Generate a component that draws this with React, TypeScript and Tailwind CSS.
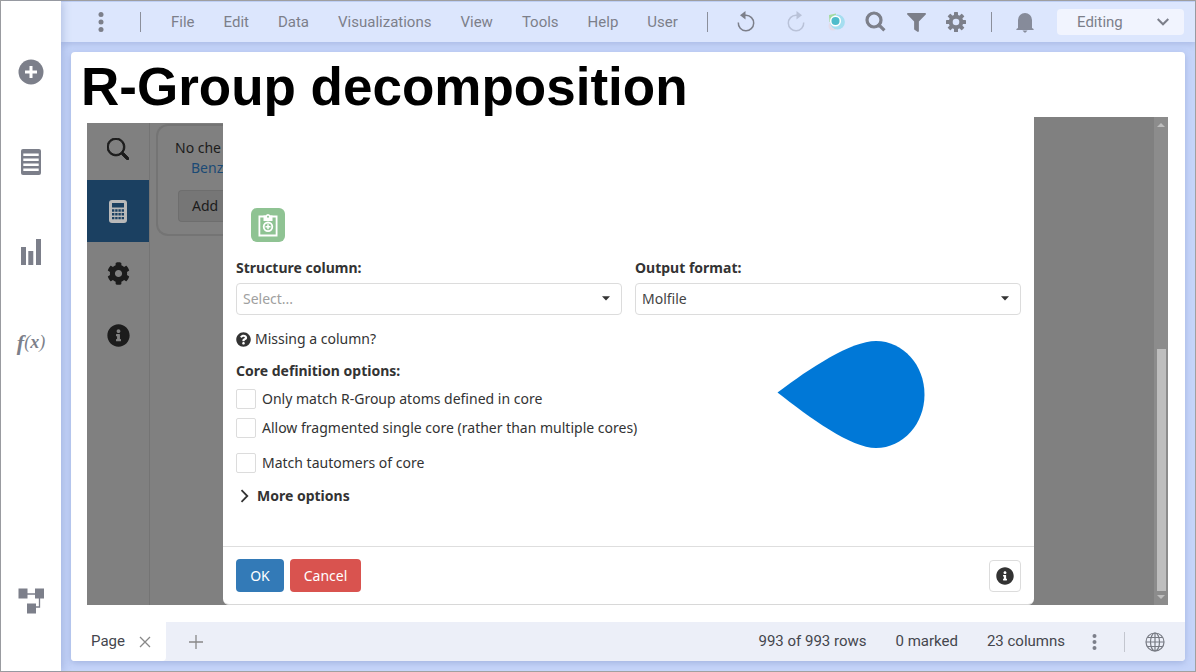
import type { ReactNode } from "react";
import { BiSearch } from "react-icons/bi";
import { BsSearch } from "react-icons/bs";
import { FaCog, FaFilter, FaInfoCircle, FaQuestionCircle } from "react-icons/fa";

const menus = ["File", "Edit", "Data", "Visualizations", "View", "Tools", "Help", "User"];

function IconButton({ label, className, children }: { label: string; className: string; children: ReactNode }) {
  return (
    <button type="button" aria-label={label} className={`flex shrink-0 items-center justify-center ${className}`}>
      {children}
    </button>
  );
}

function Dots({ className }: { className: string }) {
  return (
    <svg viewBox="0 0 6 20" className={className} fill="currentColor">
      <circle cx="3" cy="2.6" r="2.5" />
      <circle cx="3" cy="10" r="2.5" />
      <circle cx="3" cy="17.4" r="2.5" />
    </svg>
  );
}

function Undo({ className }: { className: string }) {
  return (
    <svg viewBox="0 0 20 22" className={className} fill="none" stroke="currentColor" strokeWidth="1.5">
      <path d="M2.3 11.500a7.700 7.700 0 1 0 7.700-7.200H8" />
      <path d="M9.500 0v8.500L4 4.300z" fill="currentColor" stroke="none" />
    </svg>
  );
}

function Copilot() {
  return (
    <svg viewBox="0 0 20 20" className="size-5">
      <path d="M3 3 10 1.500v9L3.500 10z" fill="#a5dba0" />
      <circle cx="7" cy="14" r="4.500" fill="#e3dcea" />
      <circle cx="11.500" cy="10" r="7.400" fill="#a5def0" />
      <circle cx="9.500" cy="9" r="4.800" fill="#4fbccb" stroke="#fff" strokeWidth="1.500" />
    </svg>
  );
}

function ToothedGear() {
  const angles = [0, 45, 90, 135];
  return (
    <svg viewBox="0 0 20 20" className="size-5" fill="currentColor">
      <mask id="hub" maskUnits="userSpaceOnUse" x="-5" y="-5" width="30" height="30">
        <rect x="-5" y="-5" width="30" height="30" fill="#fff" />
        <circle cx="10" cy="10" r="3.300" fill="#000" />
      </mask>
      <g mask="url(#hub)">
        {angles.map((a) => (
          <rect key={a} x="8" y="0" width="4" height="20" rx="0.600" transform={`rotate(${a} 10 10)`} />
        ))}
        <circle cx="10" cy="10" r="7.300" />
      </g>
    </svg>
  );
}

function Bell() {
  return (
    <svg viewBox="0 0 18 21" className="h-[21px] w-[18px]" fill="currentColor">
      <path d="M2 16V8a7 7 0 0 1 14 0v8l1.600 1v1H.4v-1z" />
      <path d="M6.500 18.600h5L9.700 20.600H8.300z" />
    </svg>
  );
}

function Calculator() {
  const rows = [11.5, 15.3, 19.1];
  return (
    <svg viewBox="0 0 18 23" className="h-[23px] w-[18px]">
      <rect width="18" height="23" rx="3" fill="#b9b9b9" />
      <path d="M3 3h12v4.500H3z" fill="#1b4061" />
      {rows.map((y) => (
        <path key={y} d={`M3 ${y}h12`} stroke="#1b4061" strokeWidth="2.400" strokeDasharray="2.400 .8" transform="translate(0 -1)" />
      ))}
    </svg>
  );
}

function Caret() {
  return (
    <svg viewBox="0 0 8 5" className="pointer-events-none absolute top-[13px] right-3 h-[5px] w-2" fill="#333">
      <path d="M0 .3h8L4 4.600z" />
    </svg>
  );
}

function SelectField({ id, label, value, muted }: { id: string; label: string; value: string; muted?: boolean }) {
  return (
    <div className="flex flex-col gap-[3px]">
      <label htmlFor={id} className="text-sm leading-6 font-bold">{label}</label>
      <div className="relative">
        <select
          id={id}
          className={`block h-8 w-full appearance-none rounded border border-[#dcdcdc] bg-white px-1.5 text-sm ${muted ? "text-[#a0a0a0]" : "text-[#444]"}`}
        >
          <option>{value}</option>
        </select>
        <Caret />
      </div>
    </div>
  );
}

function CheckRow({ label, className }: { label: string; className: string }) {
  return (
    <label className={`flex h-5 items-center gap-1.5 ${className}`}>
      <input type="checkbox" className="size-5 appearance-none rounded-xs border border-[#dcdcdc] bg-white" />
      <span className="text-sm leading-5">{label}</span>
    </label>
  );
}

function Sidebar() {
  return (
    <nav className="z-10 flex w-15 shrink-0 flex-col bg-white pt-[26px] pb-[25px] text-[#7c7f8a] shadow-[2px_0_8px_rgba(90,110,170,0.3)]">
      <IconButton label="Add" className="h-[90px]">
        <svg viewBox="0 0 26 26" className="size-[26px]">
          <circle cx="13" cy="13" r="12.500" fill="currentColor" />
          <path d="M13 7v12M7 13h12" stroke="#fff" strokeWidth="3" />
        </svg>
      </IconButton>
      <IconButton label="Data table" className="h-[90px]">
        <svg viewBox="0 0 20 26" className="h-[26px] w-5">
          <rect width="20" height="26" y="0" rx="2" fill="currentColor" />
          <path d="M2.300 5.700h15.400M2.300 10.700h15.400M2.300 15.700h15.400M2.300 20.700h15.400" stroke="#fff" strokeWidth="2.600" />
        </svg>
      </IconButton>
      <IconButton label="Visualizations" className="h-[90px]">
        <svg viewBox="0 0 20 26" className="h-[26px] w-5" fill="currentColor">
          <path d="M0 8h5v18H0zM7.300 12h5v14h-5zM15 0h5v26h-5z" />
        </svg>
      </IconButton>
      <IconButton label="Functions" className="h-[90px] font-['Liberation_Serif',serif] text-[22px] font-bold italic">
        f<span className="text-lg font-normal">(<span className="font-bold">x</span>)</span>
      </IconButton>
      <IconButton label="Data canvas" className="mt-auto h-[90px]">
        <svg viewBox="0 0 26 26" className="size-[26px]">
          <path d="M8 6h9M21.500 10v9h-5" fill="none" stroke="currentColor" strokeWidth="1.300" />
          <path d="M.5.500h9v10h-9zM17 .5h9v10h-9zM9 15.500h9v10H9z" fill="currentColor" />
        </svg>
      </IconButton>
    </nav>
  );
}

function Toolbar() {
  return (
    <header className="flex h-10 shrink-0 items-center justify-between bg-[#dce6fd] pr-[11px] text-[#7c7f8a] shadow-[0_2px_6px_rgba(90,110,170,0.25)]">
      <div className="flex items-center">
        <IconButton label="Menu" className="w-[79px]">
          <Dots className="h-5 w-1.5" />
        </IconButton>
        <span className="mr-[30px] h-5 w-px bg-[#8b8f9b]" />
        <div className="flex gap-[29px]">
          {menus.map((m) => (
            <button key={m} type="button" className="text-[15px]">{m}</button>
          ))}
        </div>
      </div>
      <div className="flex items-center">
        <span className="mr-[18px] h-5 w-px bg-[#8b8f9b]" />
        <IconButton label="Undo" className="mr-2.5 w-10"><Undo className="h-[22px] w-5" /></IconButton>
        <IconButton label="Redo" className="w-10 text-[#b9c2d8]"><Undo className="h-[22px] w-5 -scale-x-100" /></IconButton>
        <IconButton label="Copilot" className="w-10"><Copilot /></IconButton>
        <IconButton label="Search" className="w-10"><BiSearch className="size-6" strokeWidth="1.200" stroke="currentColor" /></IconButton>
        <IconButton label="Filter" className="w-10"><FaFilter className="size-[19px]" /></IconButton>
        <IconButton label="Settings" className="mr-[15px] w-10"><ToothedGear /></IconButton>
        <span className="mr-[13px] h-5 w-px bg-[#8b8f9b]" />
        <IconButton label="Notifications" className="mr-3 w-10 text-[#868b9a]"><Bell /></IconButton>
        <div className="relative">
          <select aria-label="Mode" className="block h-[26px] w-[127px] appearance-none rounded bg-[#f1f4fe] pl-5 text-[15px]">
            <option>Editing</option>
          </select>
          <svg viewBox="0 0 12 8" className="pointer-events-none absolute top-[9px] right-[15px] h-2 w-3" fill="none" stroke="currentColor" strokeWidth="2">
            <path d="m.7 1 5.300 5.300L11.300 1" />
          </svg>
        </div>
      </div>
    </header>
  );
}

function ToolPanel() {
  return (
    <aside className="mt-1.5 flex w-34 shrink-0 overflow-hidden bg-[#808080] font-['Noto_Sans',sans-serif] text-[#1c1c1c]">
      <div className="flex w-[63px] shrink-0 flex-col border-r border-[#747474]">
        <IconButton label="Search tools" className="h-[57px] pb-1.5"><BsSearch className="size-[22px]" strokeWidth="0.700" stroke="currentColor" /></IconButton>
        <IconButton label="Calculations" className="h-[62px] bg-[#1b4061]"><Calculator /></IconButton>
        <IconButton label="Tool settings" className="h-[62px]"><FaCog className="size-[23px]" /></IconButton>
        <IconButton label="About" className="h-[62px]"><FaInfoCircle className="size-[23px]" /></IconButton>
      </div>
      <div className="mt-px ml-1.5 h-28 min-w-0 flex-1 rounded-l-xl border-2 border-r-0 border-[#747474] pt-3 text-sm leading-5 whitespace-nowrap">
        <p className="pl-[17px]">No che</p>
        <a href="#benzene" className="block pl-[33px] text-[#1b4a75]">Benz</a>
        <div className="mt-3 flex pl-5">
          <button type="button" className="h-8 flex-1 rounded-l border border-r-0 border-[#6e6e6e] bg-[#767676] pl-[13px] text-left">Add</button>
        </div>
      </div>
    </aside>
  );
}

function Dialog() {
  return (
    <section className="relative flex min-w-0 flex-1 flex-col bg-[#808080] font-['Noto_Sans',sans-serif] text-[#333]">
      <div className="flex flex-1 flex-col rounded-b-md border-b border-[#d8d8d8] bg-white">
        <div className="flex flex-1 flex-col px-[13px]">
          <button type="button" aria-label="Paste structure" className="mt-[91px] ml-[15px] flex size-[34px] items-center justify-center rounded-md bg-[#8fc393]">
            <svg viewBox="0 0 20 24" className="h-6 w-5" fill="none" stroke="#fff" strokeWidth="1.800">
              <path d="M1.400 3.500h17.200v19H1.400z" />
              <path d="M5.500 8V2.500h2.200a2.500 2.500 0 0 1 4.600 0h2.200V8z" fill="#fff" stroke="none" />
              <circle cx="10" cy="3.700" r="1" fill="#8fc393" stroke="none" />
              <circle cx="10" cy="13.800" r="4.300" />
              <path d="M10 11.300v5M7.500 13.800h5" strokeWidth="1.500" />
            </svg>
          </button>
          <div className="mt-3.5 grid grid-cols-2 gap-[13px]">
            <SelectField id="structure" label="Structure column:" value="Select..." muted />
            <SelectField id="format" label="Output format:" value="Molfile" />
          </div>
          <p className="mt-3.5 flex h-5 items-center gap-1 text-sm">
            <FaQuestionCircle className="size-[15px]" />
            Missing a column?
          </p>
          <fieldset className="mt-3">
            <legend className="text-sm leading-5 font-bold">Core definition options:</legend>
            <CheckRow label="Only match R-Group atoms defined in core" className="mt-2" />
            <CheckRow label="Allow fragmented single core (rather than multiple cores)" className="mt-[9px]" />
            <CheckRow label="Match tautomers of core" className="mt-[15px]" />
          </fieldset>
          <button type="button" className="mt-[13px] flex items-center gap-2 self-start pl-1 text-sm leading-5 font-bold">
            <svg viewBox="0 0 9 14" className="h-3.5 w-[9px]" fill="none" stroke="currentColor" strokeWidth="1.800">
              <path d="m1.500 1.200 5.800 5.800-5.800 5.800" />
            </svg>
            More options
          </button>
        </div>
        <footer className="flex items-center gap-1.5 border-t border-[#dedede] px-[13px] py-3 text-sm">
          <button type="button" className="h-[33px] w-12 rounded bg-[#337ab7] text-white">OK</button>
          <button type="button" className="h-[33px] w-[71px] rounded bg-[#d9534f] text-white">Cancel</button>
          <IconButton label="Information" className="ml-auto size-8 rounded border border-[#dcdcdc]"><FaInfoCircle className="size-[18px]" /></IconButton>
        </footer>
      </div>
      <svg viewBox="0 0 148 108" className="absolute top-[223px] left-[554px] h-[108px] w-[148px]" fill="#0078d7">
        <path d="M.5 52.500C33 28 74 1 99 1c27 0 48.500 24 48.500 53.500S126 108 99 108C74 108 33 78 .5 52.500z" />
      </svg>
    </section>
  );
}

function Backdrop() {
  return (
    <div className="flex w-[134px] shrink-0 justify-end bg-[#808080]">
      <div className="flex w-3.5 flex-col items-center bg-[#8c8c8c]">
        <svg viewBox="0 0 8 16" className="h-4 w-2" fill="#bebebe"><path d="M0 10h8L4 6z" /></svg>
        <div className="flex-[216]" />
        <div className="w-[9px] flex-[242] bg-[#bebebe]" />
        <svg viewBox="0 0 8 14" className="h-3.5 w-2" fill="#bebebe"><path d="M0 4h8L4 8z" /></svg>
      </div>
    </div>
  );
}

function StatusBar() {
  return (
    <footer className="flex h-[39px] shrink-0 items-center bg-[#eceff8] text-[15px] text-[#44464d]">
      <div className="flex h-full items-center rounded-br bg-white pr-[15px] pl-5">
        <button type="button" className="mr-3.5">Page</button>
        <IconButton label="Close page" className="size-3">
          <svg viewBox="0 0 12 12" className="size-3" stroke="#888" strokeWidth="1.300"><path d="m1 1 10 10M11 1 1 11" /></svg>
        </IconButton>
      </div>
      <IconButton label="New page" className="ml-5 size-5">
        <svg viewBox="0 0 14 14" className="size-3.5" stroke="#888" strokeWidth="1.300"><path d="M7 0v14M0 7h14" /></svg>
      </IconButton>
      <div className="ml-auto flex items-center gap-[29px]">
        <span>993 of 993 rows</span>
        <span>0 marked</span>
        <span>23 columns</span>
      </div>
      <IconButton label="More" className="ml-[19px] w-5 text-[#7c7f8a]"><Dots className="h-4 w-[5px]" /></IconButton>
      <span className="mx-5 h-5 w-px bg-[#c3c6cf]" />
      <IconButton label="Language" className="mr-5 size-5">
        <svg viewBox="0 0 20 20" className="size-5" fill="none" stroke="#777a83" strokeWidth="1.200">
          <circle cx="10" cy="10" r="9" />
          <ellipse cx="10" cy="10" rx="4.500" ry="9" />
          <path d="M10 1v18M1 10h18M2.500 5.500h15M2.500 14.500h15" />
        </svg>
      </IconButton>
    </footer>
  );
}

export default function App() {
  return (
    <div className="flex min-h-screen border border-[#a0a0a0] bg-white font-[Roboto,sans-serif]">
      <Sidebar />
      <div className="flex min-w-0 flex-1 flex-col bg-[#c5d4f9] pt-px">
        <Toolbar />
        <main className="m-2.5 flex flex-1 flex-col overflow-hidden rounded bg-white shadow-[0_2px_6px_rgba(90,110,170,0.3)]">
          <h1 className="h-[65px] pl-2.5 font-['Liberation_Sans',sans-serif] text-[53px] leading-[70px] font-bold text-black">
            R-Group decomposition
          </h1>
          <div className="mr-[17px] mb-[17px] ml-4 flex flex-1">
            <ToolPanel />
            <Dialog />
            <Backdrop />
          </div>
          <StatusBar />
        </main>
      </div>
    </div>
  );
}
